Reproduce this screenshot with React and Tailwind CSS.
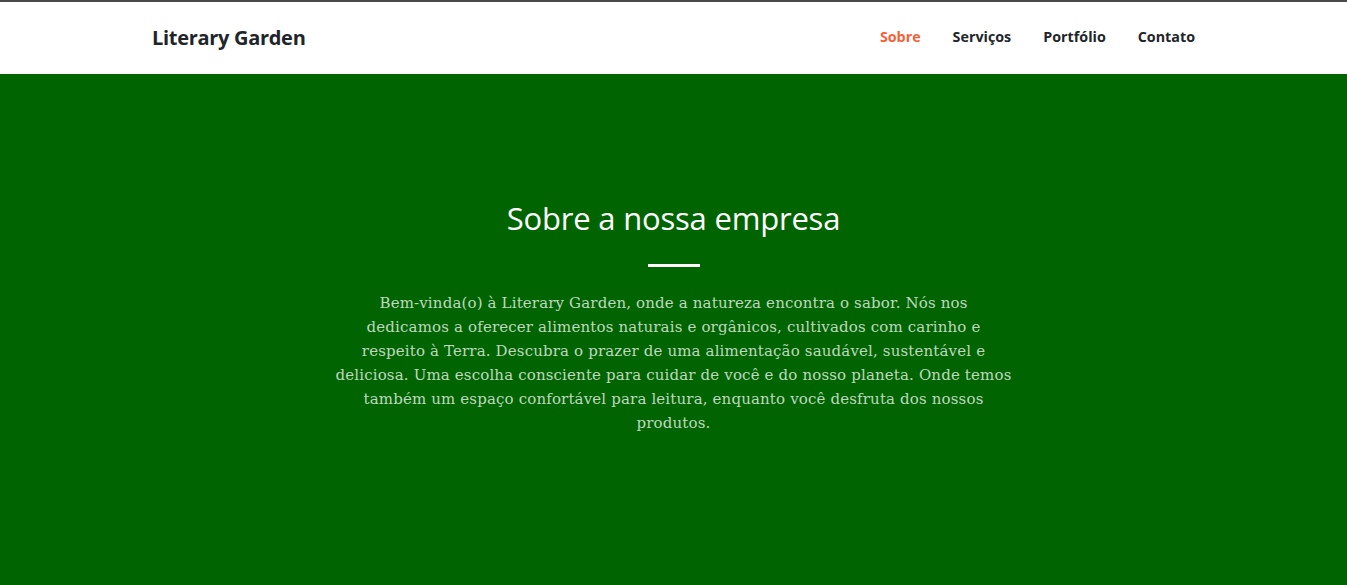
export default function App() {
  return (
    <div className="w-full h-[585px] flex flex-col overflow-hidden">
      <header className="h-[74px] bg-white border-t-2 border-[#4a4a4a] flex items-center shrink-0">
        <div className="w-full px-[152px] flex items-center justify-between pb-[1px]">
          <div className="text-[20px] font-bold text-[#212529] tracking-[-0.3px]" style={{ fontFamily: '"Open Sans", sans-serif' }}>Literary Garden</div>
          <nav className="flex items-center gap-[32px] text-[14.3px] font-bold text-[#212529] pb-[2px]" style={{ fontFamily: '"Open Sans", sans-serif' }}>
            <span className="text-[#f4623a]">Sobre</span>
            <span>Serviços</span>
            <span>Portfólio</span>
            <span>Contato</span>
          </nav>
        </div>
      </header>
      <main className="flex-1 bg-[#006400] flex flex-col items-center pt-[124px]">
        <h2 className="text-[31px] leading-[40px] text-white font-medium tracking-[-0.2px]" style={{ fontFamily: '"Open Sans", sans-serif' }}>Sobre a nossa empresa</h2>
        <div className="w-[52px] h-[3px] bg-white mt-[26px]"></div>
        <p className="mt-[24px] w-[700px] text-center text-[15px] leading-[24px] tracking-[0.15px] text-white/75" style={{ fontFamily: '"DejaVu Serif", serif' }}>
          Bem-vinda(o) à Literary Garden, onde a natureza encontra o sabor. Nós nos<br />
          dedicamos a oferecer alimentos naturais e orgânicos, cultivados com carinho e<br />
          respeito à Terra. Descubra o prazer de uma alimentação saudável, sustentável e<br />
          deliciosa. Uma escolha consciente para cuidar de você e do nosso planeta. Onde temos<br />
          também um espaço confortável para leitura, enquanto você desfruta dos nossos<br />
          produtos.
        </p>
      </main>
    </div>
  );
}
